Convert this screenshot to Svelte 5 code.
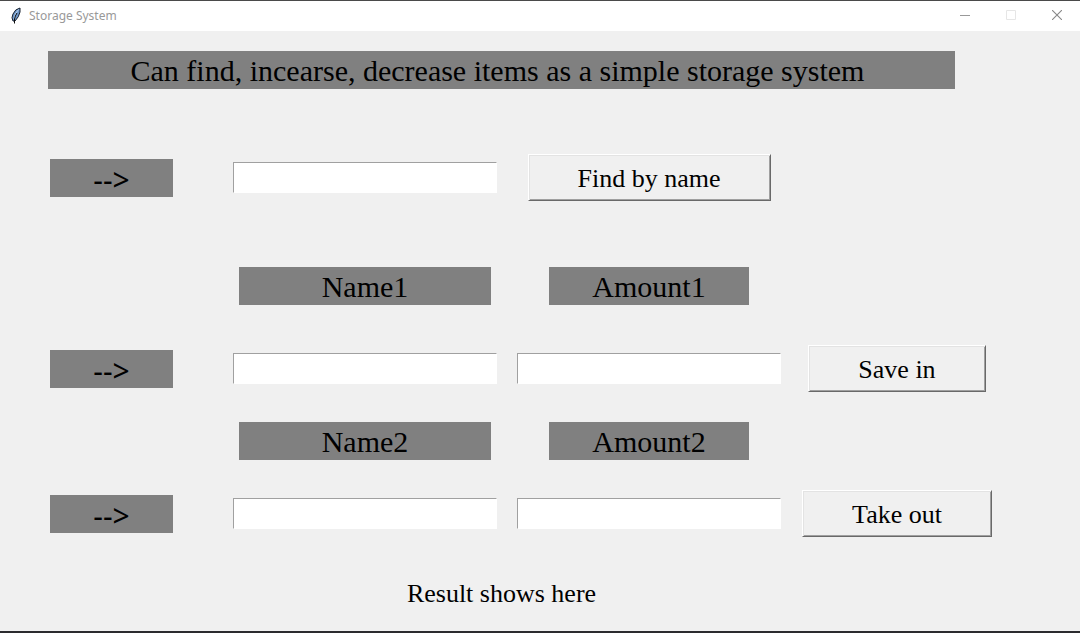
<script>
  let query = $state('');
  let saveName = $state('');
  let saveAmount = $state('');
  let takeName = $state('');
  let takeAmount = $state('');
</script>

<div class="window">
  <header class="titlebar">
    <svg class="feather" width="12" height="18" viewBox="0 0 12 18" aria-hidden="true">
      <path d="M10 1 Q5 2 3 7 Q1 11 3 14 L5 14 Q9 10 10 5 Z" fill="#6f97c9" stroke="#16202e" stroke-width="1" />
      <path d="M8.500 2.500 Q5 6 4 12" fill="none" stroke="#b9d4f0" stroke-width="1" />
      <path d="M7 6 Q5 9 4.500 12 L4.500 16.500" fill="none" stroke="#101010" stroke-width="1" />
    </svg>
    <span class="caption">Storage System</span>
    <div class="controls">
      <button type="button" aria-label="Minimize">
        <svg width="10" height="10" viewBox="0 0 10 10" shape-rendering="crispEdges"><path d="M0 5.5H10" stroke="#999" /></svg>
      </button>
      <button type="button" aria-label="Maximize" disabled>
        <svg width="10" height="10" viewBox="0 0 10 10"><path d="M.5 .5H9.5V9.5H.5Z" fill="none" stroke="#e6e6e6" /></svg>
      </button>
      <button type="button" aria-label="Close">
        <svg width="10" height="10" viewBox="0 0 10 10"><path d="M0 0L10 10M10 0L0 10" stroke="#888" stroke-width="1.1" /></svg>
      </button>
    </div>
  </header>

  <main class="form">
    <h1 class="plate heading">Can find, incearse, decrease items as a simple storage system</h1>

    <label class="plate arrow" for="query">--&gt;</label>
    <input id="query" bind:value={query} />
    <button type="button" class="action">Find by name</button>

    <label class="plate name" for="save-name">Name1</label>
    <label class="plate amount" for="save-amount">Amount1</label>

    <span class="plate arrow">--&gt;</span>
    <input id="save-name" bind:value={saveName} />
    <input id="save-amount" bind:value={saveAmount} />
    <button type="button" class="action">Save in</button>

    <label class="plate name" for="take-name">Name2</label>
    <label class="plate amount" for="take-amount">Amount2</label>

    <span class="plate arrow">--&gt;</span>
    <input id="take-name" bind:value={takeName} />
    <input id="take-amount" bind:value={takeAmount} />
    <button type="button" class="action">Take out</button>

    <output class="result">Result shows here</output>
  </main>
</div>

<style>
  .window {
    box-sizing: border-box;
    min-height: 100vh;
    display: flex;
    flex-direction: column;
    background: #f0f0f0;
    border-top: 1px solid #4a4a4a;
    border-bottom: 2px solid #2b2b2e;
    color: #000;
    font-family: "Liberation Serif", serif;
  }
  .titlebar {
    display: flex;
    align-items: center;
    height: 30px;
    background: #fff;
  }
  .feather {
    margin-left: 10px;
  }
  .caption {
    margin-left: 7px;
    font: 12px "Noto Sans", sans-serif;
    line-height: 16px;
    color: #999;
  }
  .controls {
    display: flex;
    height: 28px;
    align-self: flex-start;
    margin-left: auto;
  }
  .controls button {
    display: grid;
    place-items: center;
    width: 46px;
    padding: 0;
    border: 0;
    background: none;
  }
  .form {
    flex: 1;
    display: grid;
    grid-template-columns: 223fr 284fr 284fr 212fr;
    grid-template-rows: 78px 137px 79px 87px 58px 87px 1fr;
    align-items: center;
    justify-items: center;
    padding-right: 77px;
  }
  .plate {
    box-sizing: border-box;
    height: 38px;
    background: #808080;
    font-size: 30px;
    font-weight: 400;
    line-height: 40px;
    text-align: center;
    white-space: nowrap;
  }
  .heading {
    grid-column: 1 / -1;
    justify-self: stretch;
    margin: 0 48px;
    padding-right: 8px;
  }
  .arrow {
    grid-column: 1;
    width: 123px;
    font-family: "Noto Sans", sans-serif;
    line-height: 42px;
  }
  .name {
    grid-column: 2;
    width: 252px;
  }
  .amount {
    grid-column: 3;
    width: 200px;
  }
  input {
    box-sizing: border-box;
    justify-self: stretch;
    height: 31px;
    min-width: 0;
    margin: 0 10px;
    padding: 0 4px;
    border: 1px solid;
    border-color: #a0a0a0 #fff #fff #a0a0a0;
    border-radius: 0;
    background: #fff;
    font: 20px "Liberation Serif", serif;
  }
  .action {
    box-sizing: border-box;
    height: 47px;
    padding: 2px 49px 0;
    border: 1px solid;
    border-color: #fff #696969 #696969 #fff;
    background: #f0f0f0;
    box-shadow: inset 1px 1px #e3e3e3, inset -1px -1px #a0a0a0;
    color: #000;
    font: 26px "Liberation Serif", serif;
    white-space: nowrap;
  }
  .result {
    grid-column: 1 / -1;
    font-size: 26px;
    line-height: 32px;
  }
</style>
